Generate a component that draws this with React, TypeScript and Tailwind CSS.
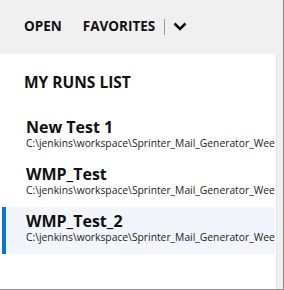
const runs = [
  { name: "New Test 1", path: "C:\\jenkins\\workspace\\Sprinter_Mail_Generator_Weekly\\New Test 1" },
  { name: "WMP_Test", path: "C:\\jenkins\\workspace\\Sprinter_Mail_Generator_Weekly\\WMP_Test" },
  { name: "WMP_Test_2", path: "C:\\jenkins\\workspace\\Sprinter_Mail_Generator_Weekly\\WMP_Test_2", selected: true },
];

const Chevron = () => (
  <svg width="14" height="9" viewBox="0 0 14 9" fill="none">
    <path d="M1.5 1.5 L7 7 L12.5 1.5" stroke="#111" strokeWidth="2.6" />
  </svg>
);

const RunRow = ({ name, path, selected }: { name: string; path: string; selected?: boolean }) => {
  return (
    <div
      className={
        "ml-[2px] h-[47px] border-l-4 pl-[20px] pt-[4px] overflow-hidden " +
        (selected ? "border-[#0a74da] bg-[#f2f6fc]" : "border-transparent")
      }
    >
      <div className="text-[16px] leading-[20px] font-bold text-[#111] whitespace-nowrap">{name}</div>
      <div className="text-[10.3px] leading-[13px] text-[#222] whitespace-nowrap overflow-hidden">{path}</div>
    </div>
  );
};

export default function App() {
  return (
    <div
      className="w-[284px] h-[290px] bg-[#f0f0f0] border-r border-b border-[#8a8a8a] flex flex-col"
      style={{ fontFamily: '"Open Sans", "Noto Sans", sans-serif' }}
    >
      <div className="h-[54px] shrink-0 flex items-start pt-[16px] pl-[24px] text-[13.5px] leading-[20px] font-bold text-[#111]">
        <span>OPEN</span>
        <span className="ml-[21px]">FAVORITES</span>
        <span className="ml-[9px] mt-[3px] w-px h-[16px] bg-[#9a9a9a]" />
        <span className="ml-[8px] mt-[6px]">
          <Chevron />
        </span>
      </div>
      <div className="flex-1 mr-[6px] bg-white border-r border-[#e6e6e6]">
        <div className="pt-[18px] pl-[24px] text-[15.5px] leading-[20px] font-bold text-[#111] mb-[21px]">
          MY RUNS LIST
        </div>
        <div className="mr-[1px]">
          {runs.map((r) => (
            <RunRow key={r.name} name={r.name} path={r.path} selected={r.selected} />
          ))}
        </div>
      </div>
    </div>
  );
}
